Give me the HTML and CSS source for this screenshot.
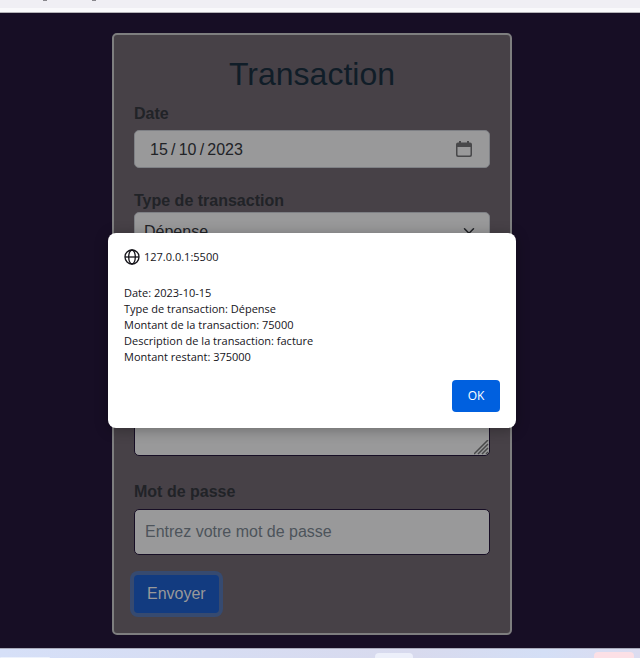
FILE: index.html
```html
<!DOCTYPE html>
<html lang="fr">
<head>
<meta charset="utf-8">
<meta name="viewport" content="width=device-width, initial-scale=1">
<title>Transaction</title>
<link rel="stylesheet" href="styles.css">
</head>
<body>
<header class="toolbar">
  <svg class="toolbar-marks" width="60" height="2" viewBox="0 0 60 2" aria-hidden="true"><path d="M0 .5h4M49 .5h4" stroke="#88878c"/></svg>
</header>
<main class="page">
  <form class="card">
    <h1 class="title">Transaction</h1>
    <div class="field field-compact">
      <label for="date">Date</label>
      <div class="date-box">
        <input class="date-input" id="date" type="text" value="15&#8201;/&#8201;10&#8201;/&#8201;2023">
        <button class="date-picker" type="button" aria-label="Calendrier">
          <svg width="16" height="16" viewBox="0 0 16 16" aria-hidden="true"><path d="M3 0h2v1.500h6V0h2v1.500h1A2 2 0 0 1 16 3.500V14a2 2 0 0 1-2 2H2a2 2 0 0 1-2-2V3.500A2 2 0 0 1 2 1.500h1zM1.500 6v7.500a1 1 0 0 0 1 1h11a1 1 0 0 0 1-1V6z" fill="#48484a" fill-rule="evenodd"/></svg>
        </button>
      </div>
    </div>
    <div class="field field-flush">
      <label for="type">Type de transaction</label>
      <select class="control select" id="type"><option>Dépense</option><option>Revenu</option></select>
    </div>
    <div class="field field-unlabelled">
      <input class="control outlined" type="text" aria-label="Montant">
    </div>
    <div class="field field-unlabelled field-area">
      <textarea class="control outlined area" aria-label="Description"></textarea>
    </div>
    <div class="field field-last">
      <label for="password">Mot de passe</label>
      <input class="control outlined" id="password" type="password" placeholder="Entrez votre mot de passe">
    </div>
    <button class="submit" type="submit">Envoyer</button>
  </form>
  <dialog class="alert" open>
    <div class="origin">
      <svg width="16" height="16" viewBox="0 0 16 16" fill="none" stroke="#15141a" stroke-width="1.300" aria-hidden="true"><circle cx="8" cy="8" r="7"/><ellipse cx="8" cy="8" rx="3.300" ry="7"/><path d="M1 8h14"/></svg>
      <span>127.0.0.1:5500</span>
    </div>
    <p class="message">Date: 2023-10-15<br>Type de transaction: Dépense<br>Montant de la transaction: 75000<br>Description de la transaction: facture<br>Montant restant: 375000</p>
    <button class="ok" type="button">OK</button>
  </dialog>
</main>
<footer class="taskbar">
  <span class="task task-search"></span>
  <span class="task task-window"></span>
  <span class="task task-alert"></span>
</footer>
</body>
</html>
```
FILE: styles.css
```css
* { box-sizing: border-box; }

body {
  margin: 0;
  min-height: 100vh;
  display: flex;
  flex-direction: column;
  background: #170e25;
  color: #212327;
  font: 16px/24px "Liberation Sans", Arial, sans-serif;
}

button, input, select, textarea { font: inherit; color: inherit; margin: 0; }

.toolbar {
  height: 13px;
  padding-left: 43px;
  background: linear-gradient(#f0eff4 8px, #f9f9fb 8px);
  border-bottom: 1px solid #b4b3b8;
}
.toolbar-marks { display: block; }

.page {
  position: relative;
  flex: 1;
  padding: 20px 16px 13px 0;
}

.card {
  width: 100%;
  max-width: 400px;
  margin: 0 auto;
  padding: 20px;
  background: #474147;
  border: 2px solid #7e7e7f;
  border-radius: 5px;
}

.title {
  margin: 0 0 10px;
  color: #101d28;
  font-size: 32px;
  font-weight: 400;
  line-height: 38px;
  text-align: center;
}

.field {
  display: flex;
  flex-direction: column;
  gap: 6px;
  margin-bottom: 22px;
}
.field label {
  font-weight: 700;
  line-height: 22px;
}
.field-compact { gap: 5px; }
.field-flush { gap: 0; }
.field-unlabelled { padding-top: 28px; }
.field-area { margin-bottom: 25px; }
.field-last { margin-bottom: 20px; }

.date-box {
  display: flex;
  align-items: center;
  height: 38px;
  padding: 0 17px 0 15px;
  background: #99999a;
  border: 1px solid #7e8085;
  border-radius: 5px;
}
.date-input {
  flex: 1;
  min-width: 0;
  padding: 2px 0 0;
  border: 0;
  background: none;
  outline: none;
}
.date-picker {
  display: flex;
  padding: 0;
  border: 0;
  background: none;
}

.control {
  width: 100%;
  height: 46px;
  padding: 0 10px;
  background-color: #99999a;
  border: 1px solid #7e8085;
  border-radius: 5px;
}
.outlined { border-color: #170e25; }
.control::placeholder { color: #4d545b; opacity: 1; }

.select {
  appearance: none;
  height: 38px;
  padding: 1px 9px 0;
  background-image: url("data:image/svg+xml,%3Csvg xmlns='http://www.w3.org/2000/svg' viewBox='0 0 16 16'%3E%3Cpath fill='none' stroke='%23212327' stroke-linecap='round' stroke-linejoin='round' stroke-width='2' d='m2 5 6 6 6-6'/%3E%3C/svg%3E");
  background-repeat: no-repeat;
  background-position: right 12px center;
  background-size: 16px 12px;
}

.area {
  display: block;
  height: 60px;
  resize: vertical;
}
.area::-webkit-resizer {
  background: url("data:image/svg+xml,%3Csvg xmlns='http://www.w3.org/2000/svg' width='15' height='15'%3E%3Cpath fill='none' stroke='%23484849' stroke-width='1.500' d='M0 14 14 0M4 14 14 4M8 14l6-6M12 14l2-2'/%3E%3C/svg%3E") right bottom no-repeat;
}

.submit {
  display: block;
  height: 38px;
  padding: 0 13px;
  color: #99999a;
  background: #123b80;
  border: 0;
  border-radius: 4px;
  box-shadow: 0 0 0 4px #364a70;
}

.alert {
  position: absolute;
  top: 220px;
  left: 0;
  right: 16px;
  display: flex;
  flex-direction: column;
  width: 408px;
  max-width: 100%;
  margin: 0 auto;
  padding: 16px;
  color: #15141a;
  background: #fff;
  border: 0;
  border-radius: 8px;
  box-shadow: 0 2px 14px rgba(0, 0, 0, 0.3);
  font: 11px/16px "Open Sans", "Noto Sans", sans-serif;
}
.origin {
  display: flex;
  align-items: center;
  gap: 4px;
  margin-bottom: 20px;
}
.message { margin: 0 0 15px; }
.ok {
  align-self: flex-end;
  width: 48px;
  height: 32px;
  padding: 0;
  color: #fff;
  background: #0060df;
  border: 0;
  border-radius: 4px;
  font-size: 12px;
}

.taskbar {
  display: grid;
  grid-template-columns: 50px 1fr 38px 181px 40px 6px;
  height: 10px;
  background: linear-gradient(90deg, #d6e0f8, #d8daee 65%, #d4dff6 85%, #dcdcf0);
  border-top: 1px solid #a9abbb;
}
.task { border-radius: 4px 4px 0 0; }
.task-search { grid-column: 1; margin-top: 8px; background: #edf2fc; }
.task-window { grid-column: 3; margin-top: 4px; background: #eceffa; }
.task-alert { grid-column: 5; margin-top: 3px; background: #fce0e6; }
```
